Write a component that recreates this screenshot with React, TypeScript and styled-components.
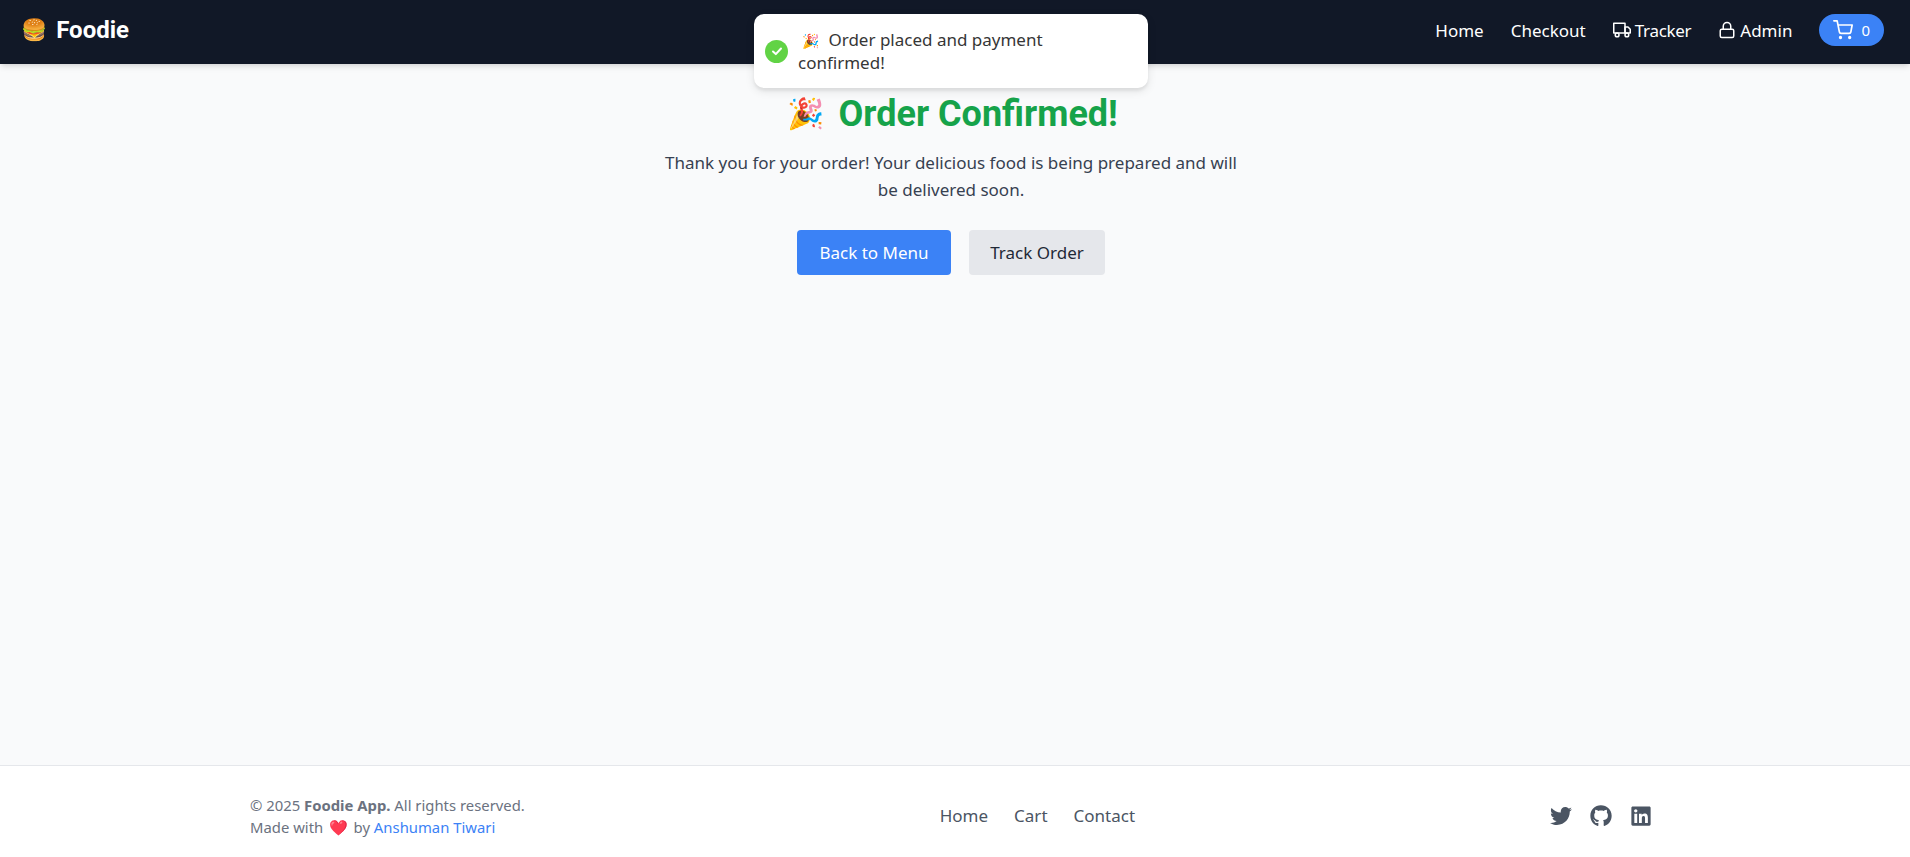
import React from "react";
import styled, { createGlobalStyle } from "styled-components";
import { FiShoppingCart, FiTruck, FiLock } from "react-icons/fi";
import { FaTwitter, FaGithub, FaLinkedin } from "react-icons/fa";

const Global = createGlobalStyle`
  html, body { margin: 0; padding: 0; }
  body { font-family: "Noto Sans", "Open Sans", "Liberation Sans", sans-serif; background: #f9fafb; }
  * { box-sizing: border-box; }
`;
const Page = styled.div`
  height: 857px; display: flex; flex-direction: column; position: relative; overflow: hidden;
`;
const Header = styled.header`
  height: 64px; flex: none; background: #111827; color: #fff; display: flex; align-items: center;
  justify-content: space-between; padding: 0 26px 4px 21px; box-shadow: 0 4px 6px -1px rgba(0,0,0,.1), 0 2px 4px -2px rgba(0,0,0,.1);
  position: relative;
`;
const Logo = styled.div`
  display: flex; align-items: center; gap: 9px; font-family: Roboto, sans-serif; font-size: 24px; font-weight: 700;
`;
const Emoji = styled.span<{ $size: number }>`
  font-size: ${p => p.$size}px; line-height: 1; font-family: "Noto Color Emoji", sans-serif; font-weight: 400;
`;
const Nav = styled.nav`
  display: flex; align-items: center; gap: 27px; font-size: 17px;
`;
const NavItem = styled.span`
  display: inline-flex; align-items: center; gap: 4px; white-space: nowrap;
`;
const TrackerItem = styled(NavItem)`
  letter-spacing: -0.3px;
`;
const CartPill = styled.div`
  display: flex; align-items: center; gap: 8px; height: 32px; padding: 0 14px; background: #3b82f6; border-radius: 16px; font-size: 15px;
`;
const Toast = styled.div`
  position: absolute; top: 14px; left: 754px; width: 394px; height: 74px; background: #fff; border-radius: 10px;
  box-shadow: 0 3px 10px rgba(0,0,0,.1), 0 3px 3px rgba(0,0,0,.05); display: flex; align-items: center;
  padding: 8px 10px 8px 11px; color: #363636; font-size: 17px; line-height: 23px;
`;
const ToastCheck = styled.span`
  width: 23px; height: 23px; border-radius: 50%; background: #61d345; flex: none; display: flex; align-items: center; justify-content: center;
`;
const ToastText = styled.div`
  margin: 0 10px; flex: 1;
`;
const ToastEmoji = styled(Emoji)`
  margin: 0 9px 0 4px;
`;
const Main = styled.main`
  flex: 1; display: flex; flex-direction: column; align-items: center; padding: 30px 8px 0 0;
`;
const Title = styled.h1`
  margin: 0 0 0 3px; font-family: Roboto, sans-serif; font-size: 36px; line-height: 40px; font-weight: 700; color: #16a34a; display: flex; align-items: center; gap: 14px;
`;
const Lead = styled.p`
  margin: 15px 0 0; width: 576px; text-align: center; font-size: 17px; line-height: 27px; color: #374151;
`;
const Buttons = styled.div`
  display: flex; gap: 18px; margin-top: 27px;
`;
const Button = styled.button<{ $primary?: boolean }>`
  height: 45px; width: ${p => (p.$primary ? 154 : 136)}px; padding: 0; border: 0; border-radius: 4px; font: inherit; font-size: 17px;
  background: ${p => (p.$primary ? "#3b82f6" : "#e5e7eb")}; color: ${p => (p.$primary ? "#fff" : "#1f2937")};
`;
const Footer = styled.footer`
  height: 92px; flex: none; background: #fff; border-top: 1px solid #e5e7eb; display: flex; align-items: center;
  justify-content: space-between; padding: 8px 258px 0 250px;
`;
const Copy = styled.div`
  font-size: 14.85px; line-height: 22px; color: #6b7280;
`;
const Heart = styled(Emoji)`
  margin: 0 2px; filter: hue-rotate(-12deg) saturate(1.1);
`;
const Author = styled.span`
  color: #3b82f6;
`;
const FootLinks = styled.div`
  display: flex; gap: 26px; font-size: 17px; color: #4b5563;
`;
const Social = styled.div`
  display: flex; gap: 18px; align-items: center; color: #4b5563; font-size: 22px;
`;

export default function App() {
  return (
    <Page>
      <Global />
      <Header>
        <Logo><Emoji $size={21}>🍔</Emoji>Foodie</Logo>
        <Nav>
          <NavItem>Home</NavItem>
          <NavItem>Checkout</NavItem>
          <TrackerItem><FiTruck size={18} />Tracker</TrackerItem>
          <NavItem><FiLock size={18} />Admin</NavItem>
          <CartPill><FiShoppingCart size={20} />0</CartPill>
        </Nav>
      </Header>
      <Main>
        <Title><Emoji $size={30}>🎉</Emoji>Order Confirmed!</Title>
        <Lead>Thank you for your order! Your delicious food is being prepared and will be delivered soon.</Lead>
        <Buttons>
          <Button $primary>Back to Menu</Button>
          <Button>Track Order</Button>
        </Buttons>
      </Main>
      <Footer>
        <Copy>
          <div>© 2025 <strong>Foodie App.</strong> All rights reserved.</div>
          <div>Made with <Heart $size={15}>❤️</Heart> by <Author>Anshuman Tiwari</Author></div>
        </Copy>
        <FootLinks><span>Home</span><span>Cart</span><span>Contact</span></FootLinks>
        <Social><FaTwitter /><FaGithub /><FaLinkedin /></Social>
      </Footer>
      <Toast>
        <ToastCheck>
          <svg width="14" height="14" viewBox="0 0 14 14" fill="none" stroke="#fff" strokeWidth="2" strokeLinecap="round" strokeLinejoin="round"><path d="M3 7.5l2.8 2.6L11 4.5" /></svg>
        </ToastCheck>
        <ToastText><ToastEmoji $size={14}>🎉</ToastEmoji>Order placed and payment confirmed!</ToastText>
      </Toast>
    </Page>
  );
}
